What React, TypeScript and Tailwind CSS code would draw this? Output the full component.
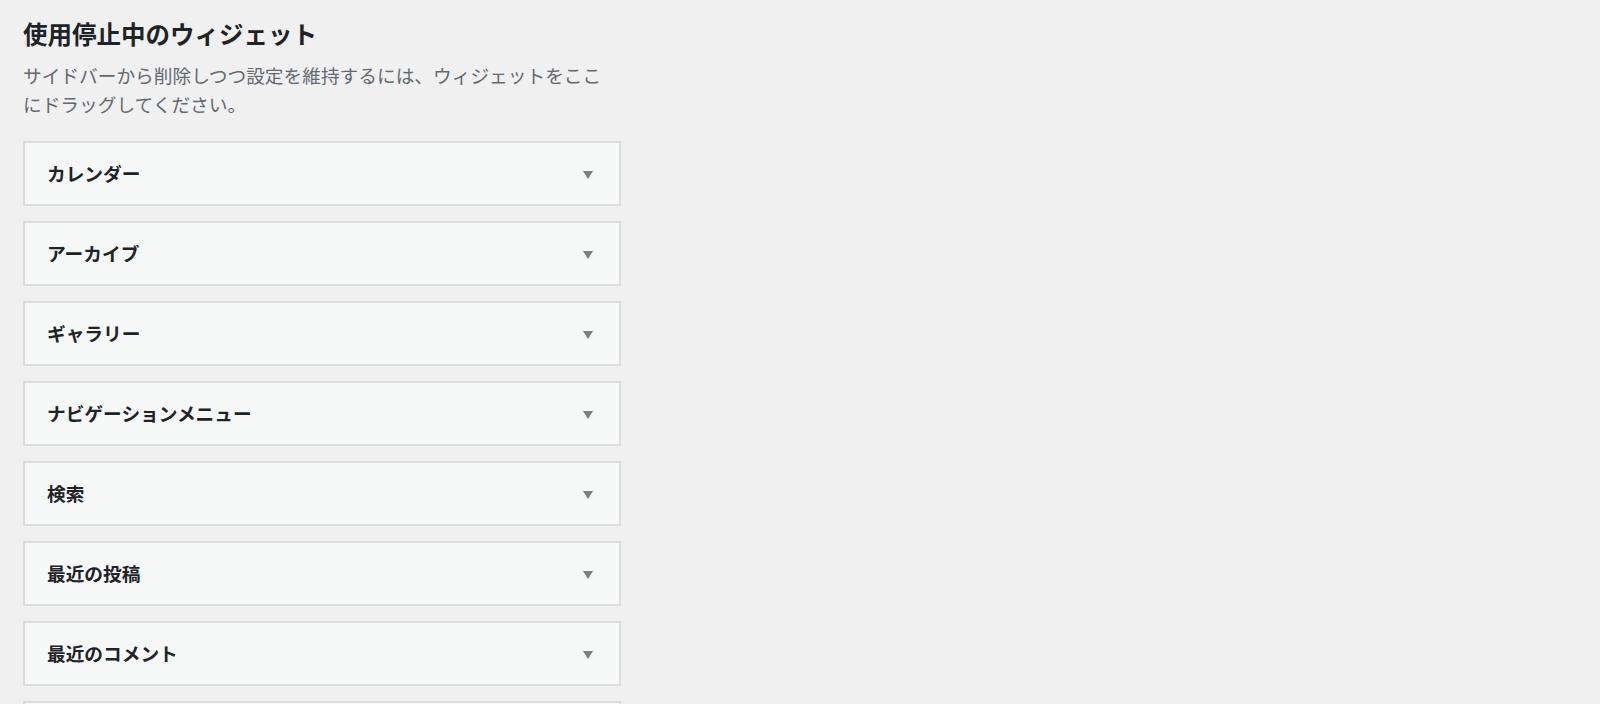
const widgets = [
  "カレンダー",
  "アーカイブ",
  "ギャラリー",
  "ナビゲーションメニュー",
  "検索",
  "最近の投稿",
  "最近のコメント",
  "",
];

const WidgetRow = ({ title }: { title: string }) => (
  <div className="flex h-[65px] shrink-0 items-center justify-between border-2 border-[#dcdcde] bg-[#f6f7f7] pl-[22px] pr-[26px]">
    <h3 className="text-[18.7px] font-bold leading-none text-[#1d2327]">{title}</h3>
    <svg width="10" height="8" viewBox="0 0 10 8" className="mt-[2px]">
      <polygon points="0,0 10,0 5,8" fill="#7b7e83" />
    </svg>
  </div>
);

export default function App() {
  return (
    <div
      className="h-[704px] w-[1600px] overflow-hidden bg-[#f0f0f1]"
      style={{ fontFamily: '"Noto Sans CJK JP", "Noto Sans", sans-serif' }}
    >
      <div className="ml-[23px] flex w-[598px] flex-col pt-[17px]">
        <h2 className="text-[24.5px] font-bold leading-[34px] text-[#1d2327]">
          使用停止中のウィジェット
        </h2>
        <p className="mt-[10px] max-w-[590px] text-[18.7px] leading-[28.5px] text-[#646970]">
          サイドバーから削除しつつ設定を維持するには、ウィジェットをここにドラッグしてください。
        </p>
        <div className="mt-[23px] flex flex-col gap-[15px]">
          {widgets.map((w, i) => (
            <WidgetRow key={i} title={w} />
          ))}
        </div>
      </div>
    </div>
  );
}
